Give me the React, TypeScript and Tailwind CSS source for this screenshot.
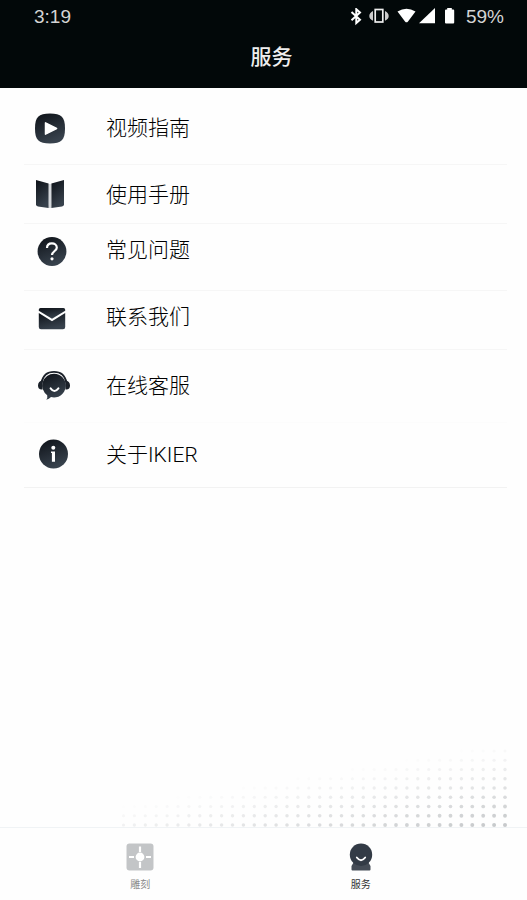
import React from "react";

function Shade({ id }: { id: string }) {
  return (
    <defs>
      <linearGradient id={id} x1="0" y1="0" x2="0.4" y2="1">
        <stop offset="0" stopColor="#0d1117" />
        <stop offset="1" stopColor="#37414c" />
      </linearGradient>
    </defs>
  );
}

function VideoIcon() {
  return (
    <svg width="32" height="32" viewBox="0 0 32 32" aria-hidden="true">
      <Shade id="g-video" />
      <path d="M16 1.500C27.500 1.500 31 5 31 16.500S27.500 31.500 16 31.500 1 28 1 16.500 4.500 1.500 16 1.500Z" fill="url(#g-video)" />
      <path d="M11.500 10.800v11.400L22.600 16.500Z" fill="#fff" stroke="#fff" strokeWidth="1.500" strokeLinejoin="round" />
    </svg>
  );
}

function BookIcon() {
  return (
    <svg width="32" height="32" viewBox="0 0 32 32" aria-hidden="true">
      <Shade id="g-book" />
      <path d="M2 1 14.600 4.500V29L4 27.500Q2 27.200 2 25.500Z" fill="url(#g-book)" />
      <path d="M30 1 17.400 4.500V29L28 27.500Q30 27.200 30 25.500Z" fill="url(#g-book)" />
      <path d="M16 5V29" stroke="#aab1b9" strokeWidth="1" />
    </svg>
  );
}

function QuestionIcon() {
  return (
    <svg width="32" height="32" viewBox="0 0 32 32" aria-hidden="true">
      <Shade id="g-faq" />
      <circle cx="16" cy="17.500" r="14.400" fill="url(#g-faq)" />
      <path d="M11 14C11 10.900 13.200 9.300 15.900 9.300S20.800 11 20.800 13.700C20.800 16.900 16 17.200 16 21.100" fill="none" stroke="#fff" strokeWidth="2.200" />
      <circle cx="16" cy="24.800" r="1.600" fill="#fff" />
    </svg>
  );
}

function MailIcon() {
  return (
    <svg width="32" height="32" viewBox="0 0 32 32" aria-hidden="true">
      <Shade id="g-mail" />
      <path d="M4.500 7H27.500Q29.200 7 29.200 8.700V9.800L16 17.800 2.800 9.800V8.700Q2.800 7 4.500 7Z" fill="url(#g-mail)" />
      <path d="M2.800 12 16 20.300 29.200 12V26Q29.200 28.200 27 28.200H5Q2.800 28.200 2.800 26Z" fill="url(#g-mail)" />
    </svg>
  );
}

function HeadsetIcon() {
  return (
    <svg width="32" height="32" viewBox="0 0 32 32" aria-hidden="true">
      <Shade id="g-chat" />
      <path d="M3.500 12.500C5 5 9.800 1.800 16 1.800S27 5 28.500 12.500" fill="none" stroke="#1b2129" strokeWidth="1.800" />
      <path d="M4.800 10.500Q0 11 0 15.500T4.500 19.500Z" fill="#1b2129" />
      <path d="M27.200 10.500Q32 11 32 15.500T27.500 19.500Z" fill="#1b2129" />
      <path d="M16 3.800a11.800 11.800 0 1 1-3 23.200Q11 29.200 8.300 29.800 9.800 27.600 9.200 25.200A11.800 11.800 0 0 1 16 3.800Z" fill="url(#g-chat)" />
      <path d="M12.600 18.300Q16.400 23.500 20.400 18.300" fill="none" stroke="#fff" strokeWidth="2" strokeLinecap="round" />
    </svg>
  );
}

function InfoIcon() {
  return (
    <svg width="32" height="32" viewBox="0 0 32 32" aria-hidden="true">
      <Shade id="g-info" />
      <circle cx="15.500" cy="15" r="14.500" fill="url(#g-info)" />
      <circle cx="15.300" cy="8.800" r="2" fill="#fff" />
      <path d="M13 12.500H17V22.800H13.900V14.100H13Z" fill="#fff" />
    </svg>
  );
}

const items = [
  { label: "视频指南", icon: VideoIcon, row: "pt-6 pb-5 border-[#f6f6f6]", inset: "pl-2.5" },
  { label: "使用手册", icon: BookIcon, row: "pt-3.5 pb-3 border-[#f6f6f6]", inset: "pl-2.5" },
  { label: "常见问题", icon: QuestionIcon, row: "pt-2.5 pb-6 border-[#f6f6f6]", inset: "pl-3" },
  { label: "联系我们", icon: MailIcon, row: "pt-2.5 pb-4 border-[#f6f6f6]", inset: "pl-3" },
  { label: "在线客服", icon: HeadsetIcon, row: "pt-5 pb-5 border-[#fcfcfc]", inset: "pl-3.5" },
  { label: "关于IKIER", icon: InfoIcon, row: "pt-4 pb-4 border-[#f2f2f2]", inset: "pl-3.5" },
];

function StatusBar() {
  return (
    <div className="flex h-8 items-center pr-[23px] pl-[34px] text-[19px] text-[#d4d4d4]">
      <span>3:19</span>
      <svg className="ml-auto" width="106" height="18" viewBox="0 0 106 18" fill="#fff" aria-hidden="true">
        {/* bluetooth */}
        <path d="M1.500 4 10 11.700 6.300 15V1.200L10 4.500 1.500 12.200" fill="none" stroke="#fff" strokeWidth="2" />
        {/* vibrate */}
        <rect x="25.200" y="1.500" width="7.600" height="12.500" fill="none" stroke="#eee" strokeWidth="1.700" />
        <path d="M23 3V12.800Q19.300 11 19.300 8T23 3ZM35 3V12.800Q38.700 11 38.700 8T35 3Z" fill="#ccc" />
        {/* wifi, signal, battery */}
        <path d="M47.500 3.500Q56.500-2 65.500 3.500L58 13.500Q56.500 15.200 55 13.500Z" />
        <path d="M69 15.200 85 0V15.200Z" />
        <path d="M97.200 0H101.800V1.500H103.200Q104.200 1.500 104.200 2.500V14.500Q104.200 15.500 103.200 15.500H96Q95 15.500 95 14.500V2.500Q95 1.500 96 1.500H97.200Z" />
      </svg>
      <span className="ml-2.5">59%</span>
    </div>
  );
}

// halftone corner, dots get stronger towards the bottom right
function DotPattern() {
  const dots = [];
  for (let r = 0; r < 9; r++) {
    for (let c = 0; c < 36; c++) {
      const t = 1 - c / 46 - r / 9;
      if (t <= 0) continue;
      dots.push(
        <circle key={`${r}-${c}`} cx={385 - c * 10.9} cy={84 - r * 9.25} r={1.5 + t * 0.5} fill="#8b9094" opacity={t * 0.48} />
      );
    }
  }
  return (
    <svg className="mt-auto mr-[19px] ml-auto" width="388" height="86" viewBox="0 0 388 86" aria-hidden="true">
      {dots}
    </svg>
  );
}

function EngraveIcon() {
  return (
    <svg width="28" height="28" viewBox="0 0 28 28" aria-hidden="true">
      <rect x="0.500" y="0.500" width="27" height="27" rx="3" fill="#c3c5c7" />
      <circle cx="14" cy="14" r="4.400" fill="#fff" />
      <path d="M14 3.500V9M14 19V25M3 14H8M20 14H25" stroke="#fff" strokeWidth="2.200" />
    </svg>
  );
}

function ServiceIcon() {
  return (
    <svg width="28" height="28" viewBox="0 0 28 28" aria-hidden="true">
      <path d="M6.500 17H21.500Q21 20 23.500 23V26.500Q23.500 27.500 22.500 27.500H5.500Q4.500 27.500 4.500 26.500V23Q7 20 6.500 17Z" fill="#454c56" />
      <circle cx="14" cy="11.700" r="11.200" fill="#333b46" />
      <path d="M9.800 14.500Q14 20 18.200 14.500" fill="none" stroke="#fff" strokeWidth="1.800" strokeLinecap="round" />
    </svg>
  );
}

export default function App() {
  return (
    <div className="flex min-h-screen flex-col bg-[#fefefe] font-['Liberation_Sans','Noto_Sans_CJK_SC',sans-serif]">
      <header className="bg-[#020809] pt-px pb-[15px]">
        <StatusBar />
        <h1 className="mt-2 pl-4 text-center text-[21px] leading-8 font-medium text-[#eee]">服务</h1>
      </header>

      <main className="flex flex-1 flex-col">
        <ul className="pr-5 pl-6">
          {items.map(({ label, icon: Icon, row, inset }) => (
            <li key={label}>
              <button className={`grid w-full grid-cols-[82px_1fr] items-center border-b text-left ${row}`}>
                <span className={inset}>
                  <Icon />
                </span>
                <span className="font-[Roboto,'Noto_Sans_CJK_SC',sans-serif] text-[21px] leading-8 font-light text-black">
                  {label}
                </span>
              </button>
            </li>
          ))}
        </ul>
        <DotPattern />
      </main>

      <nav className="grid grid-cols-2 border-t border-[#f0f3f5] bg-[#fefefe] pt-[15px] pr-14 pb-[7px] pl-[30px] text-[10px] leading-4">
        <button className="flex flex-col items-center gap-1.5 text-[#8a8a8a]">
          <EngraveIcon />
          雕刻
        </button>
        <button className="flex flex-col items-center gap-1.5 text-[#333]">
          <ServiceIcon />
          服务
        </button>
      </nav>
    </div>
  );
}
